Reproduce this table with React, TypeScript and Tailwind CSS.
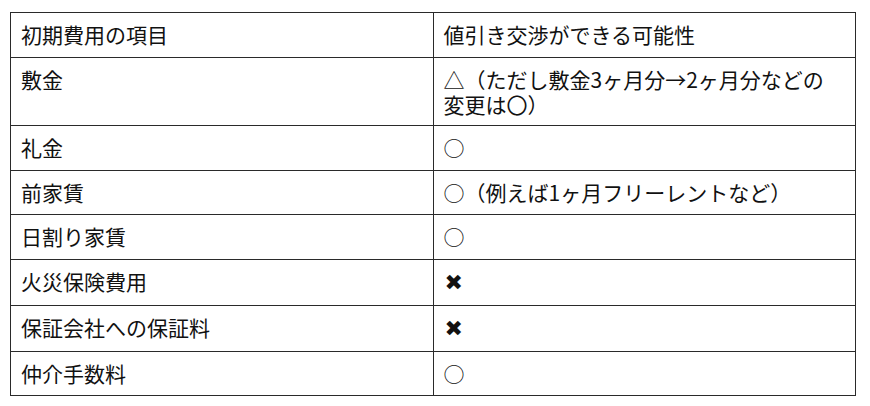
const rows: { item: string; value: React.ReactNode; tall?: boolean }[] = [
  {
    item: "敷金",
    tall: true,
    value: (
      <>
        △（ただし敷金3ヶ月分→2ヶ月分などの
        <br />
        変更は〇）
      </>
    ),
  },
  { item: "礼金", value: "○" },
  { item: "前家賃", value: "○（例えば1ヶ月フリーレントなど）" },
  { item: "日割り家賃", value: "○" },
  { item: "火災保険費用", value: "x" },
  { item: "保証会社への保証料", value: "x" },
  { item: "仲介手数料", value: "○" },
];

const cell = "border border-[#2a2a2a] px-[10px] pt-[10px] pb-[10.25px] text-left font-normal align-top";
const tallCell =
  "border border-[#2a2a2a] px-[10px] pt-[9.25px] pb-[7.75px] leading-[25px] text-left font-normal align-top";

export default function App() {
  return (
    <div
      className="min-h-screen bg-white pt-[12px] pl-[10px] text-[21px] leading-[23.5px] text-[#111]"
      style={{ fontFamily: '"Noto Sans CJK JP", "Liberation Sans", "DejaVu Sans", sans-serif' }}
    >
      <table className="w-[846px] table-fixed border-collapse border border-[#2a2a2a]">
        <thead>
          <tr>
            <th className={`w-1/2 ${cell}`}>初期費用の項目</th>
            <th className={`w-1/2 ${cell}`}>値引き交渉ができる可能性</th>
          </tr>
        </thead>
        <tbody>
          {rows.map((r) => (
            <tr key={r.item}>
              <td className={cell}>{r.item}</td>
              <td className={r.tall ? tallCell : cell}>
                {r.value === "x" ? (
                  <span style={{ fontFamily: '"DejaVu Sans", sans-serif' }} className="ml-[1px] text-[22px]">
                    ✖
                  </span>
                ) : (
                  r.value
                )}
              </td>
            </tr>
          ))}
        </tbody>
      </table>
    </div>
  );
}
